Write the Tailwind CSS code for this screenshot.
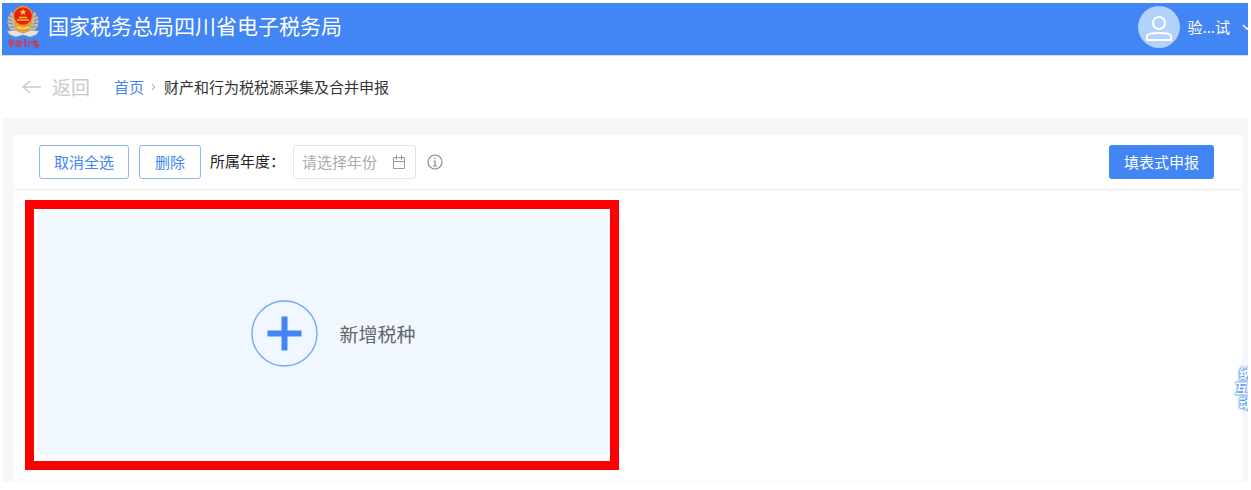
<!DOCTYPE html>
<html lang="zh-CN">
<head>
<meta charset="utf-8">
<meta name="viewport" content="width=device-width, initial-scale=1">
<title>国家税务总局四川省电子税务局</title>
<script src="https://cdn.jsdelivr.net/npm/@tailwindcss/browser@4"></script>
</head>
<body class="bg-white font-['Noto_Sans_CJK_SC',sans-serif] text-[15px] leading-5 text-[#333]">
<div class="relative mx-[2px] mr-[3px] mt-[3px] flex min-h-[479px] flex-col overflow-hidden bg-[#f6f7f9]">
  <header class="flex h-[53px] items-center border-b border-[#c9dcfb] bg-[#4285f5] pb-1 pl-1 text-white">
    <svg class="h-[44px] w-[34px] shrink-0" viewBox="0 0 34 44" role="img" aria-label="中国税务">
      <path d="M6 6C0 12 0 21 6 26L1 26L3 29L9 32L17 30L25 32L31 29L33 26L28 26C34 21 34 12 28 6L24 22H10Z" fill="#c3bcae"/>
      <path d="M3 10L6 12M2 14L6 16M2 18L7 19M4 22L9 22M31 10L28 12M32 14L28 16M32 18L27 19M30 22L25 22" stroke="#80838c" stroke-width="1.2"/>
      <path d="M1 26L9 25L17 28L25 25L33 26L30 30L24 32L17 30L10 32L4 30Z" fill="#e6e2dc" stroke="#8b8c94" stroke-width=".7"/>
      <path d="M8 18H26L23 25Q17 29 11 25Z" fill="#e5a02a"/>
      <path d="M11 22Q17 25 23 22" stroke="#fbd96a" stroke-width="1.5" fill="none"/>
      <circle cx="17" cy="11" r="9.5" fill="#e8200e" stroke="#ee9a1c" stroke-width="1.300"/>
      <path d="M17 4L18 6H20L18.500 7.500L19 10L17 8.500L15 10L15.500 7.500L14 6H16Z" fill="#ffdc38"/>
      <path d="M11 15H23M13 12.500H21" stroke="#ffbd29" stroke-width="1.500"/>
      <path d="M3 36V39H7V36ZM5 34V43M10 36H15V41H10ZM11 38H14M12.500 37V41M18 34L20 36M17 38H21M19 36V42M22 36L24 37L22 42M25 38L28 36M29 35L28 38L32 37M27 40H33L30 43M30 36V42" fill="none" stroke="#e0322c" stroke-width="1.200"/>
    </svg>
    <h1 class="ml-2 pb-1 text-[21px] leading-8 whitespace-nowrap">国家税务总局四川省电子税务局</h1>
    <button type="button" class="-mr-1 ml-auto flex items-center whitespace-nowrap">
      <svg class="size-[42px]" viewBox="0 0 42 42" fill="none" stroke="white" stroke-width="2" aria-hidden="true">
        <circle cx="21" cy="21" r="21" fill="#b3d2fa" stroke="none"/>
        <circle cx="21" cy="17" r="6"/>
        <path d="M9 34V30Q9 27 21 27Q33 27 33 30V34Z"/>
      </svg>
      <span class="ml-[7px]">验...试</span>
      <svg class="ml-3 h-3 w-[10px]" viewBox="0 0 10 12" fill="none" stroke="white" stroke-width="1.3" aria-hidden="true"><path d="M1 4L5 8L9 4"/></svg>
    </button>
  </header>
  <nav class="flex h-[62px] items-center whitespace-nowrap bg-white pl-5" aria-label="面包屑">
    <a href="#" class="flex items-center text-[19px] text-[#c9c9c9]">
      <svg class="mr-[11px] h-4 w-[19px]" viewBox="0 0 19 16" fill="none" stroke="currentColor" stroke-width="1.4" aria-hidden="true"><path d="M19 8H1M8 2L1 8L8 14"/></svg>返回</a>
    <a href="#" class="ml-6 text-[#4285f5]">首页</a>
    <svg class="mx-2 h-2 w-1" viewBox="0 0 4 8" fill="none" stroke="#999" aria-hidden="true"><path d="M0 1L3 4L0 7"/></svg>
    <span>财产和行为税税源采集及合并申报</span>
  </nav>
  <main class="mt-[17px] mr-[6px] mb-px ml-3 grow bg-white">
    <div class="flex h-[55px] items-center whitespace-nowrap border-b border-[#ebebeb] pr-7 pl-[25px]">
      <button type="button" class="h-[34px] rounded-[3px] border border-[#8db5fa] px-[14px] text-[#4285f5]">取消全选</button>
      <button type="button" class="ml-[10px] h-[34px] rounded-[3px] border border-[#8db5fa] px-[15px] text-[#4285f5]">删除</button>
      <label for="year" class="ml-[9px] pb-[2px] text-[#222]">所属年度：</label>
      <div class="ml-2 flex h-[34px] w-[123px] items-center rounded-[3px] border border-[#e3e3e3] px-2">
        <input id="year" type="text" placeholder="请选择年份" class="w-0 grow bg-transparent outline-none placeholder:text-[#aaa]">
        <svg class="mr-px size-[14px] shrink-0" viewBox="0 0 14 14" fill="none" stroke="#999" aria-hidden="true"><path d="M1.500 2.500H12.500V13.500H1.500ZM1.500 6.500H12.500M4.500 0V5M9.500 0V5"/></svg>
      </div>
      <svg class="ml-[11px] size-4" viewBox="0 0 16 16" fill="none" stroke="#888" stroke-width="1.200" role="img" aria-label="说明"><circle cx="8" cy="8" r="7"/><path d="M8 3.500V5M6.500 7H8V12M6 12H10"/></svg>
      <button type="button" class="ml-auto h-[34px] rounded-[3px] bg-[#4285f5] px-[15px] text-white">填表式申报</button>
    </div>
    <div class="grid grid-cols-2 gap-[18px] px-[11px] pt-[10px] pb-[11px]">
      <div class="border-[9px] border-[#f00] pt-[3px] pb-[6px] pl-[3px]">
        <button type="button" class="flex h-[243px] w-full items-center justify-center gap-[21px] rounded-l-lg bg-[#f0f7ff] pl-5 text-[19px] text-[#666]">
          <svg class="size-[67px]" viewBox="0 0 67 67" fill="none" aria-hidden="true"><circle cx="33.500" cy="33.500" r="32.500" stroke="#75a6f9" stroke-width="1.400"/><path d="M33.500 19.500V47.500M19.500 33.500H47.500" stroke="#4285f5" stroke-width="6" stroke-linecap="square" stroke-linejoin="round"/></svg>
          <span>新增税种</span>
        </button>
      </div>
    </div>
  </main>
  <a href="#" aria-label="纳互动" class="absolute top-[362px] -right-1 flex flex-col items-end text-[13px] leading-[15px] font-bold text-white [text-shadow:0_0_2px_#4285f5,0_0_2px_#4285f5,0_0_3px_#4285f5]">
    <span>纳</span><span class="mr-1">互</span><span>动</span>
  </a>
</div>
</body>
</html>
